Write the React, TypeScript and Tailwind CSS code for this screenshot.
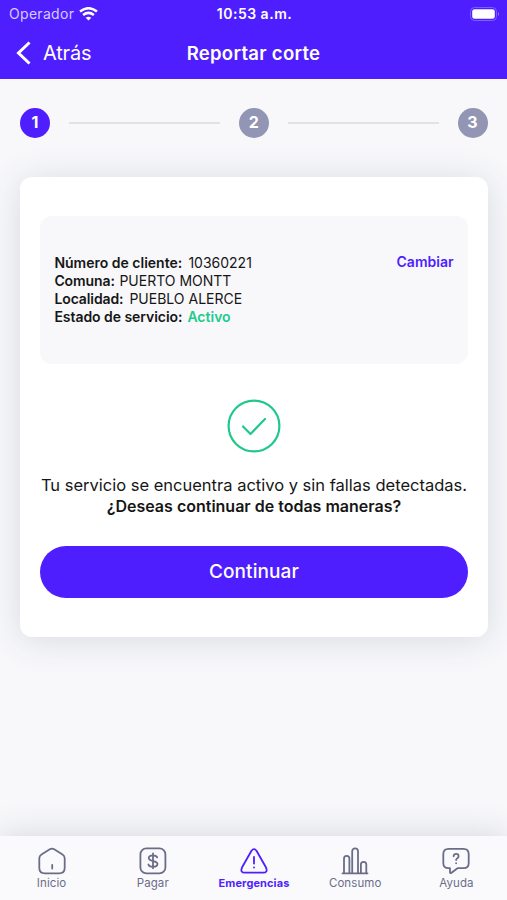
import type { ReactNode } from 'react';

const STEPS = [1, 2, 3];

const CLIENT_DETAILS = [
  { label: 'Número de cliente:', value: '10360221', labelClass: 'w-[129px]', valueClass: '' },
  { label: 'Comuna:', value: 'PUERTO MONTT', labelClass: 'w-[60px] tracking-[-0.1px]', valueClass: '' },
  { label: 'Localidad:', value: 'PUEBLO ALERCE', labelClass: 'w-[70px] tracking-[-0.1px]', valueClass: '' },
  { label: 'Estado de servicio:', value: 'Activo', labelClass: 'w-[128px] tracking-[-0.05px]', valueClass: 'font-semibold text-[#20cb8c]' },
];

const TABS = [
  { label: 'Inicio', icon: <HomeIcon />, labelClass: 'text-[11.5px] tracking-[0.1px]' },
  { label: 'Pagar', icon: <PayIcon />, labelClass: 'text-[11.5px] tracking-[0.1px]' },
  { label: 'Emergencias', icon: <AlertIcon />, labelClass: 'text-[11px] font-bold tracking-[0.1px]', active: true },
  { label: 'Consumo', icon: <ChartIcon />, labelClass: 'text-[11.5px] tracking-[0.1px]' },
  { label: 'Ayuda', icon: <HelpIcon />, labelClass: 'text-[11.5px] tracking-[0.1px]' },
];

function TabSvg({ children }: { children: ReactNode }) {
  return (
    <svg
      className="h-7 w-7"
      viewBox="0.5 0.5 28 28"
      fill="none"
      stroke="currentColor"
      strokeWidth="1.8"
      strokeLinecap="round"
      strokeLinejoin="round"
    >
      {children}
    </svg>
  );
}

function HomeIcon() {
  return (
    <TabSvg>
      <path d="M12.3 2.8 4 7.9Q1.8 9.3 1.8 11.7V21.3Q1.8 26.9 7.4 26.9H21.6Q27.2 26.9 27.2 21.3V11.7Q27.2 9.3 25 7.9L16.7 2.8Q14.5 1.4 12.3 2.8Z" />
      <path d="M14.7 18.3v3.7" />
    </TabSvg>
  );
}

function PayIcon() {
  return (
    <TabSvg>
      <rect x="1.9" y="1.9" width="25" height="25" rx="6" />
      <path d="M14.5 7v14.8M18.7 10.9c-.5-1.4-2.1-2.1-4.2-2.1-2.6 0-4.2 1.1-4.2 2.8 0 4.3 8.7 1.7 8.7 6 0 1.8-1.8 2.7-4.5 2.7-2.4 0-4.2-.7-4.6-2.3" />
    </TabSvg>
  );
}

function AlertIcon() {
  return (
    <TabSvg>
      <path d="M12 4.3 2.6 20.8Q.2 26.2 5.4 26.2H23.6Q28.8 26.2 26.4 20.8L17 4.3Q14.5 1 12 4.3Z" />
      <path d="M14.5 10.5v6.6M14.5 20.8v.3" />
    </TabSvg>
  );
}

function ChartIcon() {
  return (
    <TabSvg>
      <path d="M2 26.8h25M3.5 26V12a2.7 2.7 0 0 1 5.4 0V26M11.7 26V4.7a2.9 2.9 0 0 1 5.8 0V26M20.4 26v-8a2.7 2.7 0 0 1 5.4 0V26" />
    </TabSvg>
  );
}

function HelpIcon() {
  return (
    <TabSvg>
      <path d="M7 2.3h15q5.2 0 5.2 5.2v9q0 5.2-5.2 5.2h-6L10 26.3q-1.5 1-1.5-.8V21.7H7q-5.2 0-5.2-5.2v-9q0-5.2 5.2-5.2Z" />
      <path d="M12.1 9.8c0-3.2 5-3.1 5 0 0 2-2.5 1.8-2.5 3.8M14.6 16.6v.2" />
    </TabSvg>
  );
}

export default function App() {
  return (
    <div className="flex h-[900px] w-[507px] flex-col overflow-hidden bg-[#f8f8fb] font-['Inter',sans-serif] text-[#161616]">
      <header className="h-[79px] shrink-0 bg-[#4e1eff] text-white">
        <div className="grid h-[27px] grid-cols-3 items-center pr-[7px] pl-[9px]">
          <div className="flex items-center gap-[5px] text-[14px] tracking-[0.3px] text-[#d6ccff]">
            Operador
            <svg width="19" height="14" viewBox="0 0 19 14" fill="none" stroke="#fff" strokeWidth="2.5">
              <path d="M1 4.6q8.5-6.8 17 0M4.1 8q5.4-4.2 10.8 0" />
              <path d="m6.7 10.7 2.8 2.8 2.8-2.8q-2.8-2-5.6 0Z" fill="#fff" stroke="none" />
            </svg>
          </div>
          <span className="text-center text-[14px] font-semibold tracking-[0.5px]">10:53 a.m.</span>
          <svg className="justify-self-end" width="30" height="14" viewBox="0 0 30 14">
            <rect x=".5" y=".5" width="26" height="13" rx="4" fill="none" stroke="#7f5cff" />
            <rect x="2.2" y="2.2" width="22.6" height="9.6" rx="2.4" fill="#fff" />
            <path d="M28 5v4q2-2 0-4Z" fill="#9a7fff" />
          </svg>
        </div>
        <div className="grid h-[52px] grid-cols-3 items-center px-4">
          <button className="flex items-center gap-3 text-[20px] tracking-[-0.2px]">
            <svg width="15" height="24" viewBox="0 0 15 24" fill="none" stroke="currentColor" strokeWidth="3">
              <path d="M13.5 1.5 2.5 12l11 10.5" />
            </svg>
            Atrás
          </button>
          <h1 className="pt-0.5 text-center text-[18.5px] font-semibold tracking-[0.3px] whitespace-nowrap">Reportar corte</h1>
        </div>
      </header>

      <div className="mt-[29px] flex h-[30px] shrink-0 items-center gap-[19px] pr-[19.5px] pl-5">
        {STEPS.map((step) => (
          <div key={step} className={step > 1 ? 'flex flex-1 items-center gap-[19px]' : 'flex items-center'}>
            {step > 1 && <div className="h-[2px] flex-1 bg-[#e2e2e5]" />}
            <div
              className={`flex h-[30px] w-[30px] items-center justify-center rounded-full pb-[2px] text-[16px] font-bold text-white ${
                step === 1 ? 'bg-[#4e1eff]' : 'bg-[#9295b3]'
              }`}
            >
              {step}
            </div>
          </div>
        ))}
      </div>

      <main className="mt-[38.5px] mr-[19.5px] ml-[20.4px] flex h-[460.5px] shrink-0 flex-col items-center rounded-xl bg-white px-[19.5px] pt-[39.5px] shadow-[0_3px_34px_rgba(48,70,88,0.16)]">
        <section className="flex h-[148px] w-full items-start justify-between rounded-xl bg-[#f8f8fb] px-[14.5px] pt-[38px]">
          <div>
            {CLIENT_DETAILS.map((detail) => (
              <div key={detail.label} className="flex h-[18px] items-center gap-[5px] text-[14px] leading-[18px] whitespace-nowrap">
                <b className={`font-semibold ${detail.labelClass}`}>{detail.label}</b>
                <span className={detail.valueClass}>{detail.value}</span>
              </div>
            ))}
          </div>
          <button className="text-[14px] leading-[16px] font-semibold text-[#4e1eff]">Cambiar</button>
        </section>

        <svg className="mt-[35px] shrink-0" width="54" height="54" viewBox="0 0 54 54" fill="none" stroke="#20c98b">
          <circle cx="27" cy="27" r="25.4" strokeWidth="2.2" />
          <path d="m16 27.5 7.5 7.5L38 20" strokeWidth="2.2" strokeLinecap="round" strokeLinejoin="round" />
        </svg>

        <p className="mt-[22px] text-center text-[16.5px] leading-[21px] whitespace-nowrap">
          Tu servicio se encuentra activo y sin fallas detectadas.
          <b className="block text-[16px] font-semibold">¿Deseas continuar de todas maneras?</b>
        </p>

        <button className="mt-[29px] h-[52px] w-full shrink-0 rounded-full bg-[#4e1eff] text-[19px] font-medium tracking-[0.1px] text-white">
          Continuar
        </button>
      </main>

      <nav className="mt-auto grid h-[64px] shrink-0 grid-cols-5 bg-[#fafafd] pt-[10.5px] pl-px shadow-[0_0_34px_rgba(48,60,78,0.18)]">
        {TABS.map((tab) => (
          <button
            key={tab.label}
            className={`flex flex-col items-center ${tab.active ? 'text-[#4e1eff]' : 'text-[#6b6d88]'}`}
          >
            {tab.icon}
            <span className={`mt-px leading-[14px] ${tab.labelClass}`}>{tab.label}</span>
          </button>
        ))}
      </nav>
    </div>
  );
}
